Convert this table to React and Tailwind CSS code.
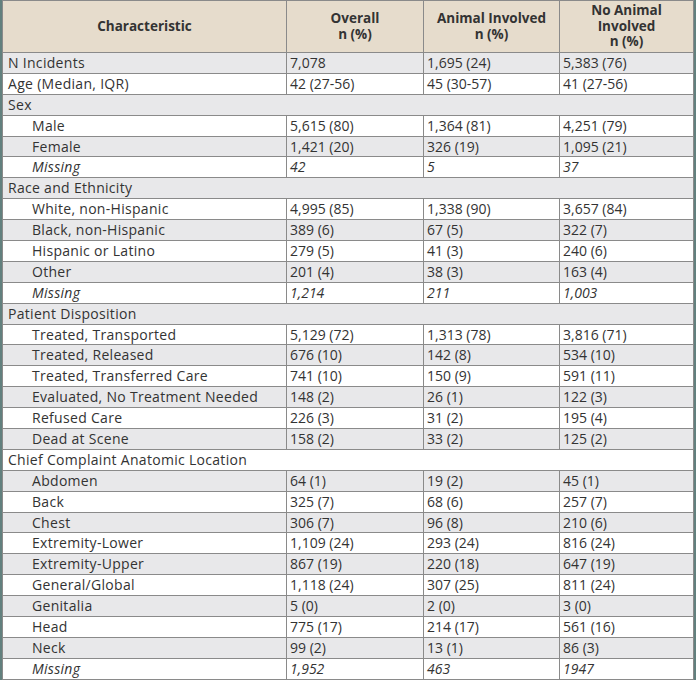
import React from 'react';

const rows = [
  { label: 'N Incidents', vals: ['7,078', '1,695 (24)', '5,383 (76)'] },
  { label: 'Age (Median, IQR)', vals: ['42 (27-56)', '45 (30-57)', '41 (27-56)'] },
  { label: 'Sex', section: true },
  { label: 'Male', indent: true, vals: ['5,615 (80)', '1,364 (81)', '4,251 (79)'] },
  { label: 'Female', indent: true, vals: ['1,421 (20)', '326 (19)', '1,095 (21)'] },
  { label: 'Missing', indent: true, italic: true, vals: ['42', '5', '37'] },
  { label: 'Race and Ethnicity', section: true },
  { label: 'White, non-Hispanic', indent: true, vals: ['4,995 (85)', '1,338 (90)', '3,657 (84)'] },
  { label: 'Black, non-Hispanic', indent: true, vals: ['389 (6)', '67 (5)', '322 (7)'] },
  { label: 'Hispanic or Latino', indent: true, vals: ['279 (5)', '41 (3)', '240 (6)'] },
  { label: 'Other', indent: true, vals: ['201 (4)', '38 (3)', '163 (4)'] },
  { label: 'Missing', indent: true, italic: true, vals: ['1,214', '211', '1,003'] },
  { label: 'Patient Disposition', section: true },
  { label: 'Treated, Transported', indent: true, vals: ['5,129 (72)', '1,313 (78)', '3,816 (71)'] },
  { label: 'Treated, Released', indent: true, vals: ['676 (10)', '142 (8)', '534 (10)'] },
  { label: 'Treated, Transferred Care', indent: true, vals: ['741 (10)', '150 (9)', '591 (11)'] },
  { label: 'Evaluated, No Treatment Needed', indent: true, vals: ['148 (2)', '26 (1)', '122 (3)'] },
  { label: 'Refused Care', indent: true, vals: ['226 (3)', '31 (2)', '195 (4)'] },
  { label: 'Dead at Scene', indent: true, vals: ['158 (2)', '33 (2)', '125 (2)'] },
  { label: 'Chief Complaint Anatomic Location', section: true },
  { label: 'Abdomen', indent: true, vals: ['64 (1)', '19 (2)', '45 (1)'] },
  { label: 'Back', indent: true, vals: ['325 (7)', '68 (6)', '257 (7)'] },
  { label: 'Chest', indent: true, vals: ['306 (7)', '96 (8)', '210 (6)'] },
  { label: 'Extremity-Lower', indent: true, vals: ['1,109 (24)', '293 (24)', '816 (24)'] },
  { label: 'Extremity-Upper', indent: true, vals: ['867 (19)', '220 (18)', '647 (19)'] },
  { label: 'General/Global', indent: true, vals: ['1,118 (24)', '307 (25)', '811 (24)'] },
  { label: 'Genitalia', indent: true, vals: ['5 (0)', '2 (0)', '3 (0)'] },
  { label: 'Head', indent: true, vals: ['775 (17)', '214 (17)', '561 (16)'] },
  { label: 'Neck', indent: true, vals: ['99 (2)', '13 (1)', '86 (3)'] },
  { label: 'Missing', indent: true, italic: true, vals: ['1,952', '463', '1947'] },
];

export default function App() {
  return (
    <div className="w-[696px] h-[680px] bg-white font-['Open_Sans',sans-serif] text-[#333]">
      <div className="border-x-2 border-[#62807e] w-[696px]">
        <table className="w-full table-fixed border-collapse text-[14px]">
          <colgroup>
            <col className="w-[284px]" />
            <col className="w-[137px]" />
            <col className="w-[136px]" />
            <col />
          </colgroup>
          <thead>
            <tr className="bg-[#e6dccc] h-[52px] text-[13.5px]">
              <th className="border border-[#8a8a8a] font-bold leading-[15.5px]">Characteristic</th>
              <th className="border border-[#8a8a8a] font-bold leading-[15.5px]">
                Overall<br />n (%)
              </th>
              <th className="border border-[#8a8a8a] font-bold leading-[15.5px]">
                Animal Involved<br />n (%)
              </th>
              <th className="border border-[#8a8a8a] font-bold leading-[15.5px]">
                No Animal<br />Involved<br />n (%)
              </th>
            </tr>
          </thead>
          <tbody>
            {rows.map((r, i) => (
              <tr key={i} className={`h-[20.9px] ${i % 2 === 0 ? 'bg-[#e8e8ea]' : 'bg-white'}`}>
                {r.section ? (
                  <td colSpan={4} className="border border-[#8a8a8a] px-[5px] py-0 leading-none tracking-[0.3px] whitespace-nowrap">
                    {r.label}
                  </td>
                ) : (
                  <>
                    <td
                      className={`border border-[#8a8a8a] py-0 leading-none tracking-[0.3px] whitespace-nowrap ${
                        r.indent ? 'pl-[29px]' : 'pl-[5px]'
                      } ${r.italic ? 'italic' : ''}`}
                    >
                      {r.label}
                    </td>
                    {r.vals.map((v, j) => (
                      <td
                        key={j}
                        className={`border border-[#8a8a8a] pl-[3px] py-0 leading-none whitespace-nowrap ${
                          r.italic ? 'italic' : ''
                        }`}
                      >
                        {v}
                      </td>
                    ))}
                  </>
                )}
              </tr>
            ))}
          </tbody>
        </table>
      </div>
    </div>
  );
}
